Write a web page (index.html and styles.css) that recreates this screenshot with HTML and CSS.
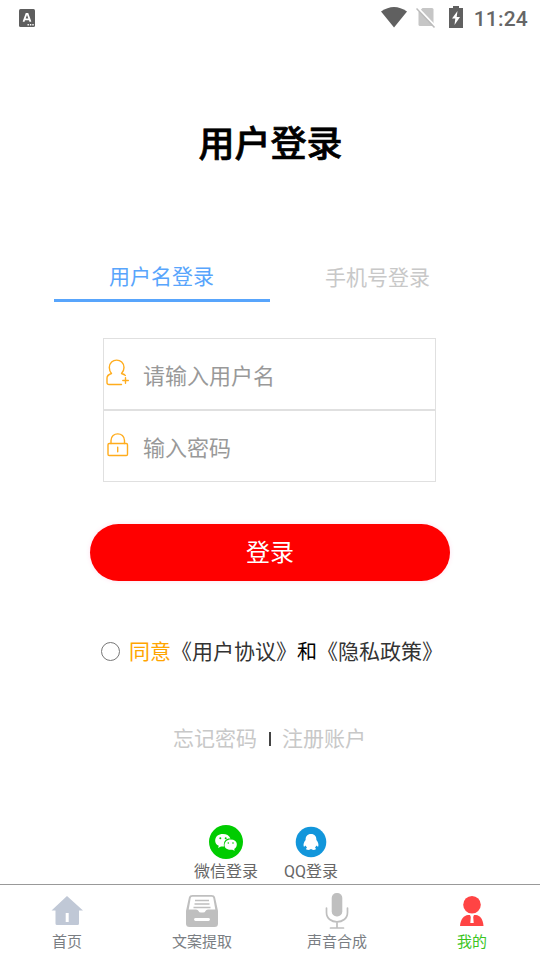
FILE: index.html
```html
<!DOCTYPE html>
<html lang="zh-CN">
<head>
<meta charset="utf-8">
<title>用户登录</title>
<link rel="stylesheet" href="styles.css">
</head>
<body>
<header class="status">
  <svg class="status-app" width="16" height="18" viewBox="0 0 16 18"><rect width="16" height="18" rx="1.5" fill="#5e5e5e"/><path d="M4.500 12.800 7.400 5h1.200l2.900 7.800M5.700 10.400h4.600" fill="none" stroke="#fff" stroke-width="1.800"/><path d="M8.500 15.800h1.400m1 0h1.400m1 0h1.400" stroke="#fff" stroke-width="1.400"/></svg>
  <div class="status-right">
    <svg width="26" height="21" viewBox="0 0 26 21"><path d="M0 4.500Q13-4.500 26 4.500L13 20.500Z" fill="#606060"/></svg>
    <svg class="sim" width="20" height="21" viewBox="0 0 20 21"><path d="M6.500 1H16q1.500 0 1.500 1.500V19H4q-1.500 0-1.500-1.500V5Z" fill="#c6c6c6"/><path d="m1.500.5 18 19" stroke="#fff" stroke-width="2"/><path d="m.5 1.500 18 19" stroke="#bbb" stroke-width="1.500"/></svg>
    <svg class="battery" width="14" height="22" viewBox="0 0 14 22"><path d="M4 0h6v2h4v20H0V2h4Z" fill="#606060"/><path d="M8.500 5 3 12.500h3.300L5.500 19 11 11H7.700Z" fill="#fff"/></svg>
    <span class="time">11:24</span>
  </div>
</header>
<main>
  <h1>用户登录</h1>
  <nav class="tabs">
    <a class="tab active"><span>用户名登录</span></a>
    <a class="tab"><span>手机号登录</span></a>
  </nav>
  <form>
    <label class="field">
      <svg width="24" height="28" viewBox="0 0 24 28" fill="none" stroke="#ffac1c" stroke-width="1.400" stroke-linecap="round" stroke-linejoin="round"><path d="M15.500 25.500H3Q1 25.500 1 23.500V19Q1 16 5.500 14.500Q3.300 12 3.300 8.500C3.300-1.400 18 -1.400 18 8.500Q18 12 15.500 14.500Q18.700 15.500 19.300 16.500M16.800 21.500h5.500M19.500 18.800v5.400"/></svg>
      <span>请输入用户名</span>
    </label>
    <label class="field">
      <svg width="24" height="28" viewBox="0 0 24 28" fill="none" stroke="#ffac1c" stroke-width="1.400" stroke-linecap="round"><rect x="2" y="12.500" width="19.500" height="12" rx="1.200"/><path d="M5 12.500V9.500C5 .7 18.500 .7 18.500 9.500v3M11.700 16.300v4.500"/></svg>
      <span>输入密码</span>
    </label>
    <button type="button">登录</button>
    <div class="agree"><i class="radio"></i><span class="yes">同意</span><a>《用户协议》</a><span class="and">和</span><a>《隐私政策》</a></div>
  </form>
  <div class="links"><a>忘记密码</a><i class="bar"></i><a>注册账户</a></div>
  <div class="social">
    <a>
      <svg width="34" height="34" viewBox="0 0 34 34"><circle cx="17" cy="17" r="17" fill="#0c0"/><path d="M14 9C4.500 9 4.500 19 9.800 20.800L9 23l3-1.500h3C14 15.500 18 13 21.500 13.500C20 10.300 17.500 9 14 9Z" fill="#fff"/><path d="M21.500 14.500C29.500 14.500 29 22 25.200 24l.5 1.800-2.400-1.100C12.500 26 14 14.500 21.500 14.500Z" fill="#fff"/><g fill="#0c0"><circle cx="11.300" cy="13.300" r="1"/><circle cx="16.700" cy="13.300" r="1"/><circle cx="19.300" cy="18" r=".8"/><circle cx="24" cy="18" r=".8"/></g></svg>
      <span>微信登录</span>
    </a>
    <a>
      <svg width="34" height="34" viewBox="0 0 34 34"><circle cx="17" cy="17" r="15.300" fill="#1296db"/><path d="M17 9C13.300 9 11.500 11.500 11.600 15C10 17 9 19.500 9.800 21.500q.5.700 1.700-.9Q12 21.700 13 22.500C10.500 24.600 14 25.800 17 24C20 25.800 23.500 24.600 21 22.500Q22 21.700 22.500 20.600Q23.700 22.200 24.200 21.500C25 19.500 24 17 22.400 15C22.500 11.500 20.700 9 17 9Z" fill="#fff"/></svg>
      <span>QQ登录</span>
    </a>
  </div>
</main>
<footer>
  <a class="item">
    <svg width="36" height="38" viewBox="0 0 36 38"><path d="M18 4 34 18.500H30V31.500Q30 33 28.500 33H8Q6.500 33 6.500 31.500V18.500H2.500Z" fill="#c0c8d6"/><path d="M16.700 21h3v9h-3Z" fill="#fff"/></svg>
    <span>首页</span>
  </a>
  <a class="item">
    <svg width="36" height="38" viewBox="0 0 36 38"><path d="M8.500 3H27.500Q30.500 3 31 5L34 19V31.500Q34 35 30.500 35H5.500Q2 35 2 31.500V19L5 5Q5.500 3 8.500 3Z" fill="#bfbfbf"/><path d="M8.500 4.800H27.500Q29 4.800 29.300 6L31.300 17.500H24Q22 17.500 21.500 19T19 20.500H17Q15 20.500 14.500 19T12 17.500H4.700L6.700 6Q7 4.800 8.500 4.800Z" fill="#fff"/><path d="M11 8.500h14M10.500 12h15M9.500 15.500h17" stroke="#bfbfbf" stroke-width="1.500"/><path d="M11.500 27.500h13" stroke="#fff" stroke-width="2.800" stroke-linecap="round"/></svg>
    <span>文案提取</span>
  </a>
  <a class="item">
    <svg width="36" height="38" viewBox="0 0 36 38"><rect x="12.700" y="1" width="10.600" height="23.500" rx="5" fill="#bfbfbf"/><path d="M7.500 16v4.500C7.500 33 28.500 33 28.500 20.500V16M18 30v5.500M11.500 36h13" fill="none" stroke="#bfbfbf" stroke-width="1.700" stroke-linecap="round"/></svg>
    <span>声音合成</span>
  </a>
  <a class="item current">
    <svg width="36" height="38" viewBox="0 0 36 38"><g fill="#ff4444"><circle cx="18" cy="12.700" r="8.800"/><path d="M6 34C6.500 27 10 23.500 14 23H22C26 23.500 29 27 29.500 34Z"/></g><path d="M16 23h4l-.8 2 .5 6h-3.400l.5-6Z" fill="#fff"/></svg>
    <span>我的</span>
  </a>
</footer>
</body>
</html>
```
FILE: styles.css
```css
* { box-sizing: border-box; }
body {
  margin: 0;
  height: 960px;
  display: flex;
  flex-direction: column;
  background: #fff;
  font-family: Roboto, "Noto Sans CJK SC", sans-serif;
  overflow: hidden;
}
svg { display: block; flex: none; }
.status {
  height: 36px;
  padding: 0 12px 0 19px;
  display: flex;
  align-items: center;
  justify-content: space-between;
}
.status-right { display: flex; align-items: center; margin-top: -1px; }
.sim { margin-left: 9px; }
.battery { margin-left: 13px; margin-top: -2px; }
.time { margin-left: 11px; padding-top: 2px; font-size: 21px; line-height: 24px; font-weight: 500; color: #666; letter-spacing: .2px; }
main { flex: 1; display: flex; flex-direction: column; align-items: center; }
h1 { margin: 84px 0 0 1px; font-size: 36px; line-height: 50px; font-weight: 500; color: #000; -webkit-text-stroke: .7px #000; }
.tabs { margin-top: 82px; width: 432px; height: 50px; display: flex; }
.tab { flex: 1; padding: 1px 1px 0 0; text-align: center; font-size: 21px; line-height: 50px; color: #c8c8c8; }
.tab.active { color: #58a5fc; line-height: 48px; border-bottom: 3px solid #58a5fc; }
form { margin-top: 36px; width: 360px; display: flex; flex-direction: column; align-items: center; }
.field {
  width: 333px;
  height: 72px;
  margin-right: 1px;
  border: 1px solid #e0e0e0;
  padding-left: 2px;
  display: flex;
  align-items: center;
  font-size: 22px;
  color: #999;
}
.field svg { margin-top: -3px; }
.field span { margin-left: 13px; padding-top: 6px; line-height: 32px; }
button {
  margin-top: 42px;
  width: 360px;
  height: 57px;
  border: 0;
  border-radius: 29px;
  padding: 1px 0 0;
  background: #f00;
  box-shadow: 0 0 5px rgba(255, 0, 140, .12);
  color: #fff;
  font: 24px/57px Roboto, "Noto Sans CJK SC", sans-serif;
}
.agree {
  margin-top: 55px;
  width: 338px;
  height: 32px;
  display: flex;
  align-items: center;
  white-space: nowrap;
  font-size: 21px;
  line-height: 32px;
  color: #333;
}
.radio { width: 19px; height: 19px; border: 1px solid #777; border-radius: 50%; margin: -1px 9px 0 0; flex: none; }
.yes { color: #ffa500; }
.and { color: #000; font-size: 20px; }
.links { margin: 55px 1px 0 0; display: flex; align-items: center; font-size: 21px; line-height: 32px; color: #c8c8c8; }
.bar { width: 2px; height: 14px; margin: 0 11px 0 12px; background: #444; }
.social { margin-top: 70px; display: flex; gap: 26px; margin-right: 8px; font-size: 16px; line-height: 24px; color: #666; }
.social a { display: flex; flex-direction: column; align-items: center; }
.social span { padding-top: 1px; }
footer { height: 76px; border-top: 1px solid #999; display: flex; }
.item { flex: 1; padding: 7px 1px 0 0; display: flex; flex-direction: column; align-items: center; font-size: 15px; line-height: 22px; color: #7a7e83; }
.item span { padding-top: 1px; }
.item.current { color: #3cc51f; }
```
